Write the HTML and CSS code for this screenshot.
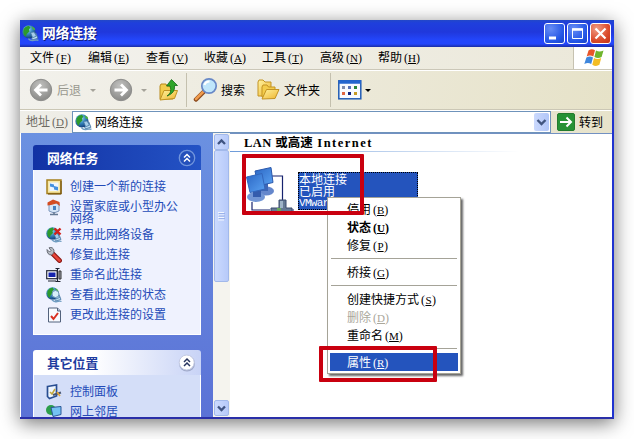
FILE: index.html
```html
<!DOCTYPE html>
<html lang="zh-CN">
<head>
<meta charset="utf-8">
<title>网络连接</title>
<link rel="stylesheet" href="styles.css">
</head>
<body>
<svg width="0" height="0" class="defs">
  <defs>
    <radialGradient id="globeFill" cx=".4" cy=".3" r=".75"><stop offset="0" stop-color="#b9e4f5"/><stop offset=".45" stop-color="#3c8fc4"/><stop offset="1" stop-color="#0c3474"/></radialGradient>
    <radialGradient id="grayFill" cx=".45" cy=".3" r=".75"><stop offset="0" stop-color="#c2c2c0"/><stop offset="1" stop-color="#858583"/></radialGradient>
    <linearGradient id="folderFill" x1="0" y1="0" x2="1" y2="1"><stop offset="0" stop-color="#fff3a0"/><stop offset="1" stop-color="#eeb42c"/></linearGradient>
    <linearGradient id="screenFill" x1="0" y1="0" x2="1" y2="1"><stop offset="0" stop-color="#2b66c4"/><stop offset="1" stop-color="#5aa2f2"/></linearGradient>
    <symbol id="globe" viewBox="0 0 16 16">
      <path d="M7 9 L13 7.500 15 12.500 10 14Z" fill="#b8daf0" stroke="#41719e" stroke-width=".8"/>
      <circle cx="6.500" cy="6.500" r="6.200" fill="url(#globeFill)"/>
      <path d="M1.500 4 Q3 1 6.500 .6 L8 2.500 6.500 4 7 6 4.500 8.500 3.500 11 Q.5 8.500 1.500 4Z" fill="#2d9a2c"/>
      <path d="M9 1 L12 3 12.500 5 10 4Z" fill="#4db33a"/>
      <path d="M8 7 L11.500 6.500 13.500 10.500 10 12Z" fill="#a6cdea" stroke="#41719e" stroke-width=".7"/>
      <path d="M6 12.800 Q8 15.300 11 14.500 T15.500 14.500" fill="none" stroke="#6f9dc1" stroke-width="1.400"/>
    </symbol>
  </defs>
</svg>

<div class="window">
  <header class="titlebar">
    <svg class="app-icon" width="17" height="17"><use href="#globe"/></svg>
    <h1>网络连接</h1>
    <div class="controls">
      <span class="ctl"><svg width="19" height="19"><rect x="4" y="12.500" width="7" height="3" fill="#fff"/></svg></span>
      <span class="ctl"><svg width="19" height="19"><path d="M4.500 5h10v9.500h-10z" fill="none" stroke="#fff"/><path d="M4 5.500h11" stroke="#fff" stroke-width="2.500"/></svg></span>
      <span class="ctl close"><svg width="19" height="19"><path d="M4.500 4.500l10 10M14.500 4.500l-10 10" stroke="#fff" stroke-width="2.200"/></svg></span>
    </div>
  </header>

  <nav class="menubar">
    <div class="menus">
      <span>文件<i>(<u>F</u>)</i></span><span>编辑<i>(<u>E</u>)</i></span><span>查看<i>(<u>V</u>)</i></span><span>收藏<i>(<u>A</u>)</i></span><span>工具<i>(<u>T</u>)</i></span><span>高级<i>(<u>N</u>)</i></span><span>帮助<i>(<u>H</u>)</i></span>
    </div>
    <div class="flag">
      <svg width="22" height="20" viewBox="0 0 22 20">
        <path d="M5.500 2.500Q8.500 0 12 2.200L10.300 8.600Q7 6.600 3.700 8.600Z" fill="#e8562a"/>
        <path d="M13 2.600Q16.500 4.600 20.500 2.500L18.600 9Q15 11 11.400 9Z" fill="#6fb52d"/>
        <path d="M3.400 9.600Q7 7.600 10 9.500L8.200 16Q5 14 1.300 16Z" fill="#3f86dc"/>
        <path d="M11 10.100Q14.500 12 18.200 10.100L16.400 16.800Q13 19 9.300 16.700Z" fill="#f3bd25"/>
      </svg>
    </div>
  </nav>

  <div class="toolbar">
    <span class="tool back"><svg width="24" height="24"><circle cx="12" cy="12" r="10.700" fill="url(#grayFill)" stroke="#8d8d8b"/><path d="M18.500 12H7M12 6.500L6.500 12l5.500 5.500" fill="none" stroke="#fff" stroke-width="2.800"/></svg><b>后退</b></span>
    <span class="caret gray c1"></span>
    <svg class="fwd" width="24" height="24"><circle cx="12" cy="12" r="10.700" fill="url(#grayFill)" stroke="#8d8d8b"/><path d="M5.500 12H17M12 6.500l5.500 5.500-5.500 5.500" fill="none" stroke="#fff" stroke-width="2.800"/></svg>
    <span class="caret gray c2"></span>
    <svg class="up" width="20" height="24" viewBox="0 0 20 24">
      <path d="M1 8l1-2h5l1 2h6v13H1z" fill="#f2cc4c" stroke="#b88a1d"/>
      <path d="M1 22L5 12.500H18.500L15.500 20.500Z" fill="url(#folderFill)" stroke="#c09222"/>
      <path d="M8 18Q13.500 15 11 8H7.500L12.500 1.500 18.500 7.500H15.500Q16.500 15 8 18Z" fill="#2fa52b" stroke="#116c17" stroke-width=".8"/>
    </svg>
    <span class="sep s1"></span>
    <span class="tool search"><svg width="26" height="26"><path d="M3 22.500L10.500 15" stroke="#8b4a1f" stroke-width="4.500" stroke-linecap="round"/><path d="M3 22L10 15" stroke="#ef9b4c" stroke-width="2.500" stroke-linecap="round"/><circle cx="16" cy="9" r="7.200" fill="#bfe6fb" stroke="#6888c6" stroke-width="1.700"/><path d="M11.500 8Q12.500 4.500 16.500 4.500" fill="none" stroke="#fff" stroke-width="2.200"/></svg><b>搜索</b></span>
    <span class="tool folders"><svg width="23" height="22" viewBox="0 0 23 22"><path d="M1 3L2 1H6L8 3H14V14L5 17H1Z" fill="url(#folderFill)" stroke="#c39322"/><path d="M5 18V8L6 6H10L11.500 8H18V18Z" fill="#f3cc4b" stroke="#c39322"/><path d="M5 20L9.500 10.500H22L18 19.500Z" fill="url(#folderFill)" stroke="#c39322"/></svg><b>文件夹</b></span>
    <span class="sep s2"></span>
    <svg class="views" width="24" height="20">
      <rect x=".8" y=".8" width="22" height="18" fill="#f8faff" stroke="#205bb5" stroke-width="1.500"/><path d="M1 2H23" stroke="#2365cf" stroke-width="3.500"/>
      <path fill="#7f8cae" d="M4 6h3v3H4z"/><path fill="#5770b7" d="M10 6h3v3h-3z"/><path fill="#29863a" d="M16 6h3v3h-3z"/><path fill="#df6540" d="M4 12h3v3H4z"/><path fill="#10217e" d="M10 12h3v3h-3z"/><path fill="#c79a25" d="M16 12h3v3h-3z"/>
    </svg>
    <span class="caret c3"></span>
  </div>

  <div class="addressbar">
    <label>地址<i>(<u>D</u>)</i></label>
    <div class="field"><svg width="17" height="17"><use href="#globe"/></svg><span>网络连接</span>
      <em class="drop"><svg width="15" height="18"><path d="M3.500 7l4 4 4-4" fill="none" stroke="#41557f" stroke-width="2.400"/></svg></em>
    </div>
    <svg class="go" width="18" height="18"><rect x=".5" y=".5" width="17" height="17" rx="1.500" fill="#269235" stroke="#237b2d"/><path d="M3 9H14M9.500 4.500L14 9l-4.500 4.500" fill="none" stroke="#fff" stroke-width="2"/></svg>
    <span class="go-text">转到</span>
  </div>

  <main class="content">
    <aside class="sidebar">
      <section class="panel primary">
        <h2>网络任务<svg width="18" height="18"><circle cx="9" cy="9" r="7.700" fill="#2450bb" stroke="#7195dc" stroke-width="1.300"/><path d="M6 8.500l3-3 3 3M6 12.500l3-3 3 3" fill="none" stroke="#fff" stroke-width="1.500"/></svg></h2>
        <ul>
          <li><svg width="16" height="16"><rect x="1" y="1" width="14" height="13.500" fill="#f7e7a5" stroke="#a7801c" stroke-width="1.500"/><path d="M15 2v13H2" fill="none" stroke="#6b4a0c"/><rect x="3.500" y="3.500" width="9" height="8.500" fill="#eef6ff"/><path d="M4 4.500l4 1v3l-4-1zM8 7l4 1v3.500l-4-1z" fill="#4591df"/></svg><span>创建一个新的连接</span></li>
          <li class="tall"><svg width="16" height="17"><path d="M3 6L8 2l5 4v6l-5 2-5-2z" fill="#d4e4f6" stroke="#7d98bd"/><path d="M1.500 6.500V3.500L7 .5 13.500 3 14 7 10.500 4.500 5 6Z" fill="#d34c22"/><path d="M7 7h3v4H7z" fill="#477fbe"/><path d="M8 13v2.500M4 15.500h8" stroke="#657a94" stroke-width="1.500"/></svg><span>设置家庭或小型办公<br>网络</span></li>
          <li><svg width="16" height="16"><use href="#globe"/><path d="M8.500 1.500l6 6M14.500 1.500l-6 6" stroke="#d3221b" stroke-width="2.400"/></svg><span>禁用此网络设备</span></li>
          <li><svg width="16" height="16"><path d="M7 7L13.500 13.500" stroke="#8b1713" stroke-width="4.800" stroke-linecap="round"/><path d="M7 7L13.500 13.500" stroke="#e74438" stroke-width="2.600" stroke-linecap="round"/><path d="M1 2.500l2.500 2.500L5 3.500 3 .8Q7-.5 8 3.500L7.800 6 5.500 8Q1 8 1 2.500Z" fill="#b7bcc4" stroke="#50545d" stroke-width=".8"/></svg><span>修复此连接</span></li>
          <li><svg width="16" height="16"><rect x=".7" y="3.700" width="10.500" height="8" fill="#fff" stroke="#24283b" stroke-width="1.200"/><path d="M2.500 5.500h7v4.500h-7z" fill="#1524ad"/><path d="M2 14h8M9.500 1.500h4M11.500 1.500v13M9.500 14.500h5" stroke="#202432" stroke-width="1.200"/><path d="M13 4h2v8h-2z" fill="#a4a7b2" stroke="#333"/></svg><span>重命名此连接</span></li>
          <li><svg width="16" height="16"><use href="#globe"/><circle cx="9.500" cy="7" r="3.500" fill="#d8effa" stroke="#6c94b8"/></svg><span>查看此连接的状态</span></li>
          <li><svg width="16" height="16"><path d="M2.500 1h9l3 3v11h-12z" fill="#f7faff" stroke="#53627c"/><path d="M11.500 1v3h3" fill="#b9c8dd" stroke="#53627c"/><path d="M5 9l2.500 3L12 6" fill="none" stroke="#d93122" stroke-width="2"/></svg><span>更改此连接的设置</span></li>
        </ul>
      </section>
      <section class="panel secondary">
        <h2>其它位置<svg width="18" height="18"><circle cx="9" cy="9.500" r="8" fill="#9fa9ca"/><circle cx="8.700" cy="8.500" r="7.500" fill="#fff" stroke="#c3cae3"/><path d="M6 8l3-3 3 3M6 12l3-3 3 3" fill="none" stroke="#27345f" stroke-width="1.500"/></svg></h2>
        <ul>
          <li><svg width="16" height="16"><path d="M1.500 2.500l9-1.500v11l-7 2.500-2-2z" fill="#edf5ff" stroke="#284d91" stroke-width="1.700"/><path d="M4 8l2 2 3-5" fill="none" stroke="#c4a83b" stroke-width="1.500"/><path d="M7 11l8-2.500" stroke="#485672" stroke-width="2.200"/><path d="M11 8l3 4" stroke="#e6a534" stroke-width="1.500"/></svg><span>控制面板</span></li>
          <li><svg width="16" height="16"><circle cx="5" cy="6" r="5" fill="#2c9e4c"/><path d="M5 3.500l10-1v8l-8 2z" fill="#74c2f3" stroke="#2b5797"/><path d="M7 14h7" stroke="#687f9e" stroke-width="2"/></svg><span>网上邻居</span></li>
        </ul>
      </section>
    </aside>

    <div class="scrollbar">
      <span class="sbtn"><svg width="13" height="14"><path d="M3 9l3.500-3.500L10 9" fill="none" stroke="#3f5482" stroke-width="2.300"/></svg></span>
      <span class="thumb"><svg width="7" height="9"><path d="M0 .5h6M0 3h6M0 5.500h6M0 8h6" stroke="#f2f6ff"/><path d="M1 1.500h6M1 4h6M1 6.500h6" stroke="#8ba5e3" stroke-width=".7"/></svg></span>
      <span class="track"></span>
      <span class="sbtn"><svg width="13" height="14"><path d="M3 5.500L6.500 9 10 5.500" fill="none" stroke="#3f5482" stroke-width="2.300"/></svg></span>
    </div>

    <div class="list">
      <h3><i>LAN </i>或高速<i> Internet</i></h3>
      <div class="rule"></div>
      <div class="tile">
        <svg width="48" height="46" viewBox="0 0 48 46">
          <path d="M26 9H36.500V33M6 35V43H24M34 43H48" fill="none" stroke="#17236f" stroke-width="1.200"/>
          <ellipse cx="20" cy="24" rx="8" ry="4.500" fill="#6587cc"/><path d="M14 16h8v8h-8z" fill="#3e66b5"/>
          <path d="M9 4L25 .500 27 15.500 12 19Z" fill="url(#screenFill)" stroke="#2b58ab"/>
          <ellipse cx="10" cy="30" rx="9" ry="5" fill="#7296d5"/><path d="M7 23h8v7H7z" fill="#345cad"/>
          <path d="M.500 10L16 6.500 19 22 4 25.500Z" fill="url(#screenFill)" stroke="#3266bc"/>
          <path d="M33 33h7v8h6v4H25v-4h8z" fill="#647994" stroke="#3b4c6f"/><path d="M34 34h3v7h-3z" fill="#9eb4c8"/><path d="M31 41h4v3h-4z" fill="#68a65d"/>
        </svg>
        <div class="label"><span>本地连接</span><span>已启用</span><span class="device">VMware</span></div>
      </div>
    </div>
  </main>
</div>

<div class="context">
  <div>停用<i>(<u>B</u>)</i></div>
  <div class="strong">状态<i>(<u>U</u>)</i></div>
  <div>修复<i>(<u>P</u>)</i></div>
  <hr>
  <div>桥接<i>(<u>G</u>)</i></div>
  <hr>
  <div>创建快捷方式<i>(<u>S</u>)</i></div>
  <div class="off">删除<i>(<u>D</u>)</i></div>
  <div>重命名<i>(<u>M</u>)</i></div>
  <hr>
  <div class="sel">属性<i>(<u>R</u>)</i></div>
</div>
<div class="mark mark-tile"></div>
<div class="mark mark-item"></div>
</body>
</html>
```

FILE: styles.css
```css
* { box-sizing: border-box; }
body {
  margin: 0;
  width: 634px;
  height: 439px;
  overflow: hidden;
  background: #fff;
  color: #000;
  font: 12px/18px "Noto Sans CJK SC", sans-serif;
}
svg { display: block; flex: none; }
.defs { position: absolute; }
h1, h2, h3, ul { margin: 0; padding: 0; }
i {
  padding-left: 2px;
  font-family: "Liberation Serif", serif;
  font-style: normal;
}
u {
  display: inline-block;
  min-width: 7px;
  font-size: 11px;
  line-height: 12px;
  text-align: center;
  text-decoration-thickness: 1px;
  text-underline-offset: 1px;
}
b { font-weight: 400; }

.window {
  display: flex;
  flex-direction: column;
  width: 594px;
  height: 399px;
  margin: 20px;
  background: #ece9d8;
  border-right: 2px solid #1f33d0;
  border-bottom: 2px solid #2a2fa8;
  box-shadow: 0 4px 18px rgba(0, 0, 0, .55);
}

.titlebar {
  display: flex;
  align-items: center;
  flex: none;
  height: 27px;
  margin-right: -2px;
  padding: 0 3px 0 2px;
  background: linear-gradient(#2348c8 0, #1f3fdc 3px, #2038dc 12px, #2346fb 20px, #2346fb 24px, #1a2ca4 27px);
}
.titlebar h1 {
  margin-left: 3px;
  padding-bottom: 3px;
  color: #fff;
  font-size: 13.700px;
  line-height: 20px;
  font-weight: 700;
  text-shadow: 1px 1px #0f1d78;
}
.controls { display: flex; gap: 2px; margin-left: auto; }
.ctl {
  width: 21px;
  height: 21px;
  border: 1px solid #fff;
  border-radius: 3px;
  background: radial-gradient(circle at 30% 25%, #668cf5, #2456e6 65%, #1942c6);
}
.close { background: radial-gradient(circle at 30% 25%, #f09c84, #db4c2c 60%, #c43318); }

.menubar {
  display: flex;
  flex: none;
  height: 23px;
  background: linear-gradient(90deg, #f3f2ee, #ebe8d9);
  border-bottom: 1px solid #cbc7b8;
}
.menus { display: flex; gap: 16px; padding: 1px 0 0 10px; }
.menus span { width: 42px; white-space: nowrap; }
.flag {
  width: 39px;
  margin-left: auto;
  padding: 1px 0 0 9px;
  border-left: 1px solid #c6c2b1;
  background: #fff;
}

.toolbar {
  display: flex;
  align-items: center;
  flex: none;
  height: 40px;
  padding-left: 9px;
  border-top: 1px solid #fff;
  border-bottom: 1px solid #cbc7b5;
  background: linear-gradient(100deg, #f2f1ec, #ece9d9 55%, #e6e2c8);
}
.tool { display: flex; align-items: center; white-space: nowrap; }
.back { gap: 4px; color: #99988f; }
.caret {
  width: 0;
  height: 0;
  border: 3px solid transparent;
  border-top-color: #000;
  border-bottom: 0;
}
.caret.gray { border-top-color: #a5a39a; }
.c1 { margin-left: 9px; }
.fwd { margin-left: 13px; }
.c2 { margin-left: 8px; }
.up { margin-left: 12px; }
.sep { width: 1px; height: 34px; background: #c4c0ae; }
.s1 { margin-left: 7px; }
.search { gap: 2px; margin-left: 6px; }
.folders { gap: 4px; margin-left: 12px; }
.s2 { margin-left: 10px; }
.views { margin-left: 7px; }
.c3 { margin-left: 3px; }

.addressbar {
  display: flex;
  align-items: center;
  flex: none;
  height: 23px;
  border-top: 1px solid #fff;
  background: linear-gradient(90deg, #efeee8, #e7e3cb);
}
.addressbar label { width: 52px; padding: 0 0 2px 6px; color: #6d6b63; white-space: nowrap; }
.field {
  display: flex;
  align-items: center;
  gap: 3px;
  width: 479px;
  height: 22px;
  padding: 0 1px 0 2px;
  border: 1px solid #6f93bb;
  background: #fff;
}
.drop {
  width: 15px;
  height: 18px;
  margin-left: auto;
  border-radius: 2px;
  background: linear-gradient(90deg, #cbd9fd, #b1c6f8);
}
.go { margin-left: 6px; }
.go-text { margin-left: 4px; padding-bottom: 1px; }

.content { display: flex; flex: 1; min-height: 0; background: #fff; }
.sidebar {
  width: 193px;
  overflow: hidden;
  padding: 12px 0 0 12px;
  border-left: 1px solid #fff;
  background: linear-gradient(#6b91e1, #5b72d6);
}
.panel { width: 168px; }
.panel h2 {
  display: flex;
  align-items: center;
  justify-content: space-between;
  height: 25px;
  padding: 0 5px 0 14px;
  border-radius: 3px 3px 0 0;
  font-size: 12.800px;
  line-height: 18px;
  font-weight: 700;
}
.panel ul { list-style: none; padding: 7px 0 0 12px; }
.panel li {
  display: flex;
  gap: 8px;
  height: 20px;
  padding-top: 3px;
  color: #234bb8;
  line-height: 12px;
  white-space: nowrap;
}
.panel li svg { margin-top: -1px; }
.panel li.tall { height: 28px; }
.primary h2 { background: linear-gradient(90deg, #1232a4, #2453c5); color: #fff; }
.primary ul { height: 165px; border: 1px solid #fff; border-top: 0; background: #eff2fe; }
.secondary { margin-top: 15px; }
.secondary h2 { background: linear-gradient(90deg, #fff 35%, #c8d3f6); color: #1e3c9f; }
.secondary ul { height: 60px; border: solid #fff; border-width: 0 1px; background: #d4def8; }

.scrollbar {
  display: flex;
  flex-direction: column;
  width: 17px;
  padding: 1px;
  background: #f5f4ee;
}
.sbtn, .thumb {
  display: flex;
  align-items: center;
  justify-content: center;
  flex: none;
  width: 15px;
  height: 16px;
  border: 1px solid #a2b9ea;
  border-radius: 2px;
  background: linear-gradient(90deg, #cbdafe, #b7caf9);
}
.thumb { height: 132px; }
.track { flex: 1; }

.list { flex: 1; border-top: 1px solid #7291c2; }
.list h3 {
  height: 17px;
  padding-left: 14px;
  font-size: 12.500px;
  line-height: 15px;
  font-weight: 700;
  white-space: pre;
}
.list h3 i { padding: 0; font-size: 12.500px; letter-spacing: 1.500px; }
.list h3 i:first-child { letter-spacing: .4px; }
.rule { width: 290px; height: 1px; background: linear-gradient(90deg, #6d9bd9, #fff); }
.tile { display: flex; gap: 4px; padding: 15px 0 0 16px; }
.label {
  width: 120px;
  height: 38px;
  margin-top: 5px;
  border: 1px dotted #000;
  background: #2454bd;
  color: #fff;
  line-height: 12px;
}
.label span { display: block; }
.label .device { font-family: "Liberation Mono", monospace; font-size: 11px; letter-spacing: -.7px; }

/* The context menu floats over the list. */
.context {
  position: absolute;
  left: 327px;
  top: 197px;
  width: 134px;
  height: 177px;
  padding: 2px;
  border: 1px solid #a5a397;
  background: #fff;
  box-shadow: 2px 2px 2px rgba(0, 0, 0, .6);
}
.context div { height: 18px; padding-left: 17px; line-height: 17px; white-space: nowrap; }
.context hr { height: 1px; margin: 4px 1px; border: 0; background: #a5a398; }
.context .strong { font-weight: 700; }
.context .off { color: #aaa79b; }
.context .sel { background: #2454bd; color: #fff; }
.mark { position: absolute; border: 4px solid #c9000f; border-radius: 1px; }
.mark-tile { left: 242px; top: 154px; width: 122px; height: 61px; }
.mark-item { left: 319px; top: 346px; width: 118px; height: 36px; }
```
